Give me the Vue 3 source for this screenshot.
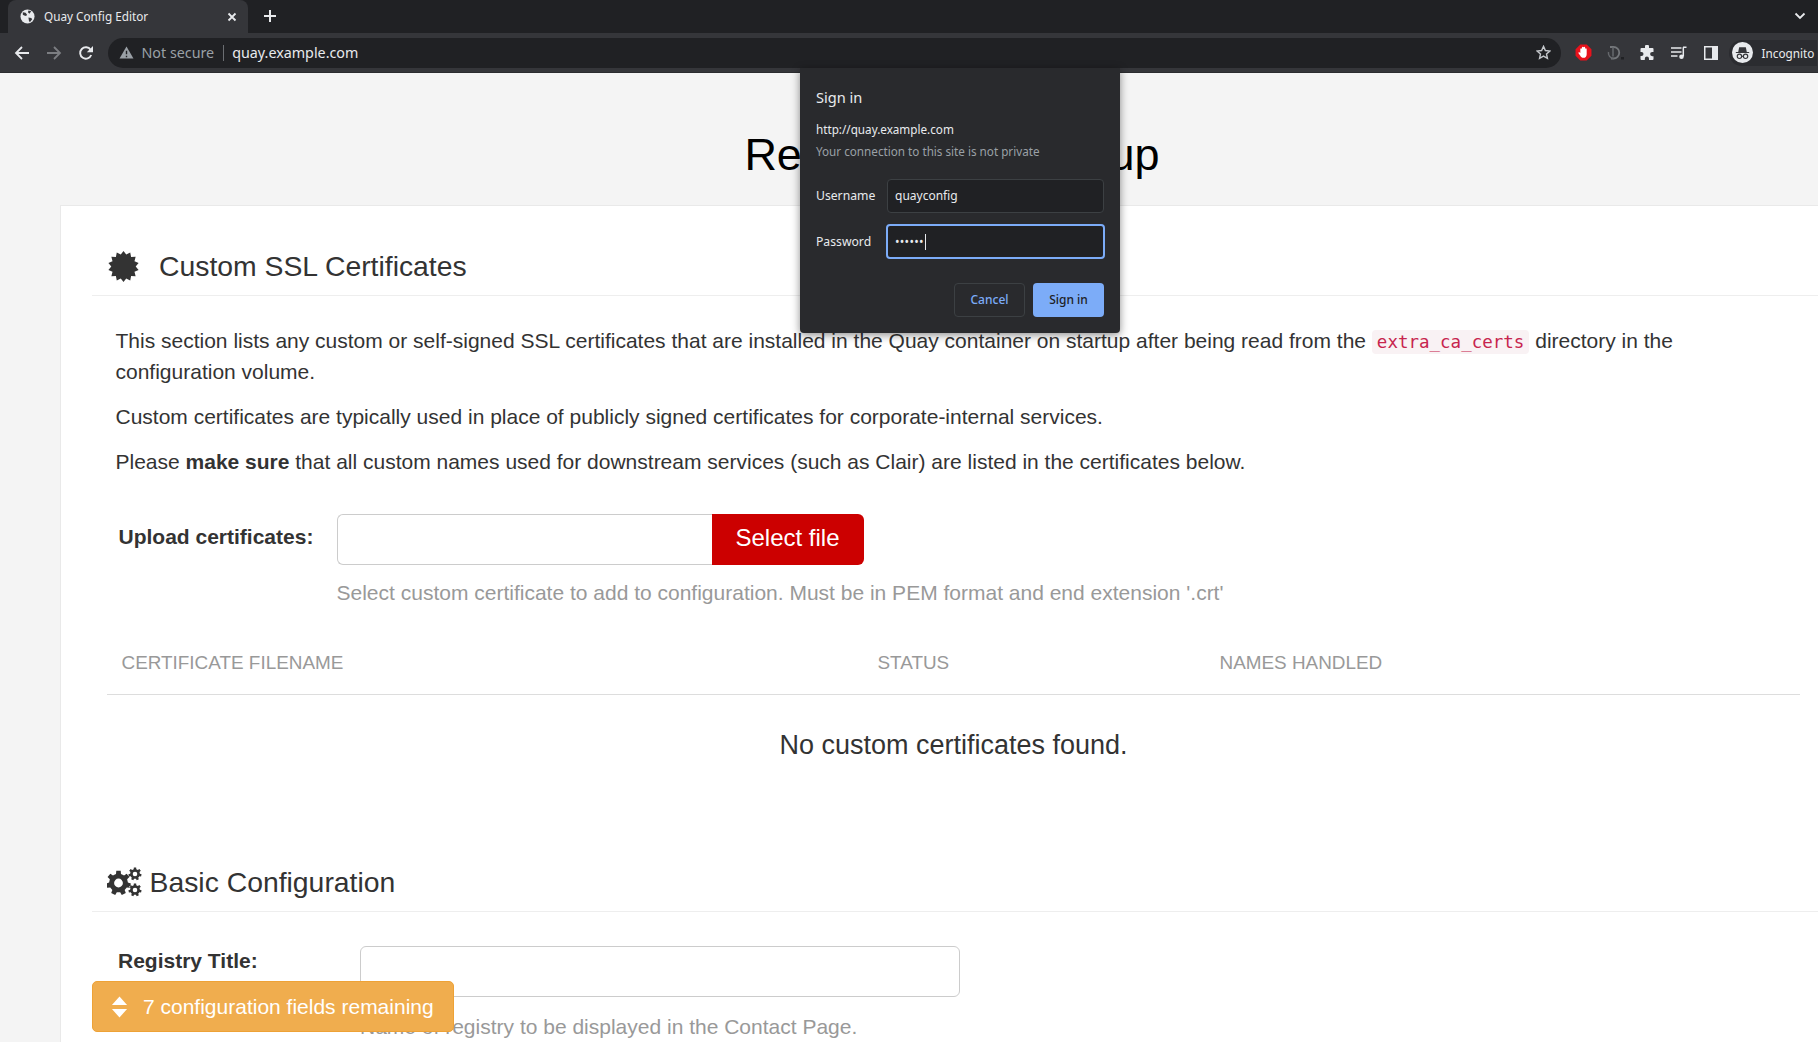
<script setup>
function gearPath(cx, cy, outer, inner, hole, teeth) {
  const pts = []
  const step = (Math.PI * 2) / teeth
  for (let i = 0; i < teeth; i++) {
    const a = i * step - Math.PI / 2
    const w = step * 0.2
    const w2 = step * 0.3
    pts.push([a - w2, inner], [a - w, outer], [a + w, outer], [a + w2, inner])
  }
  const d = pts
    .map(([a, r], i) => `${i ? 'L' : 'M'}${(cx + Math.cos(a) * r).toFixed(2)} ${(cy + Math.sin(a) * r).toFixed(2)}`)
    .join('')
  return `${d}Z M${cx - hole} ${cy}a${hole} ${hole} 0 1 0 ${hole * 2} 0a${hole} ${hole} 0 1 0 ${-hole * 2} 0Z`
}
const gears = [gearPath(11.5, 16, 12.4, 9.4, 4.4, 7), gearPath(28, 7, 6.6, 4.9, 2.3, 7), gearPath(28, 23, 6.6, 4.9, 2.3, 7)].join(' ')

const badge = Array.from({ length: 28 }, (_, i) => {
  const a = (i * Math.PI) / 14 - Math.PI / 2
  const r = i % 2 ? 11.8 : 15
  return `${(15 + Math.cos(a) * r).toFixed(2)},${(15 + Math.sin(a) * r).toFixed(2)}`
}).join(' ')
</script>

<template>
  <div class="window">
    <div class="tabstrip">
      <div class="tab">
        <svg class="favicon" viewBox="0 0 16 16" width="15" height="15">
          <circle cx="8" cy="8" r="7.5" fill="#e8eaed" />
          <path d="M3 3.500l3 .5 1.500 2-1 1.500-2-.5-1.500-1zM9 9l3 .5 1 1.500-2.500 3-1-1.500zM9 1.500l3 1-2 2.500-1.500-1.500z" fill="#35363a" />
        </svg>
        <span class="tab-title">Quay Config Editor</span>
        <svg class="tab-close" viewBox="0 0 10 10" width="10" height="10">
          <path d="M1.500 1.500l7 7M8.500 1.500l-7 7" stroke="#e8eaed" stroke-width="1.800" />
        </svg>
      </div>
      <svg class="new-tab" viewBox="0 0 14 14" width="14" height="14">
        <path d="M7 1v12M1 7h12" stroke="#e8eaed" stroke-width="2" />
      </svg>
      <svg class="tab-menu" viewBox="0 0 12 8" width="12" height="8">
        <path d="M1.500 1.500L6 6l4.500-4.500" fill="none" stroke="#e8eaed" stroke-width="1.800" />
      </svg>
    </div>

    <div class="toolbar">
      <svg class="nav" viewBox="0 0 16 16" width="16" height="16">
        <path d="M15 8H2.500M8 2L2 8l6 6" fill="none" stroke="#e8eaed" stroke-width="1.800" />
      </svg>
      <svg class="nav" viewBox="0 0 16 16" width="16" height="16">
        <path d="M1 8h12.500M8 2l6 6-6 6" fill="none" stroke="#7c7e82" stroke-width="1.800" />
      </svg>
      <svg class="nav" viewBox="0 0 16 16" width="16" height="16">
        <path d="M13.200 10a5.700 5.700 0 1 1-.6-5.200" fill="none" stroke="#e8eaed" stroke-width="1.900" />
        <path d="M15 1v6.200H8.800z" fill="#e8eaed" />
      </svg>
      <div class="omnibox">
        <svg viewBox="0 0 16 14" width="15" height="13" class="warn">
          <path d="M8 .5L15.500 13.500H.5z" fill="#9aa0a6" />
          <path d="M8 5v4M8 10.500v1.500" stroke="#202124" stroke-width="1.500" />
        </svg>
        <span class="not-secure">Not secure</span>
        <span class="divider"></span>
        <span class="url">quay.example.com</span>
        <svg class="star" viewBox="0 0 16 16" width="15" height="15">
          <path d="M8 1.500l2 4.400 4.800.5-3.600 3.200 1 4.700L8 11.900l-4.200 2.400 1-4.700L1.200 6.400 6 5.900z" fill="none" stroke="#c4c7cb" stroke-width="1.500" />
        </svg>
      </div>
      <div class="ext">
        <svg viewBox="0 0 16 16" width="17" height="17">
          <path d="M5 .5h6L15.500 5v6L11 15.500H5L.5 11V5z" fill="#e8121c" />
          <path d="M5 8.500V4.600a.8.8 0 0 1 1.500 0V3.200a.8.8 0 0 1 1.500 0V3a.8.8 0 0 1 1.500 0v1.600a.8.8 0 0 1 1.500 0v5c0 2.200-1.300 3.400-3 3.400-1.500 0-2.300-.7-3-2L3.300 8.800c-.4-1 .9-1.500 1.700-.3z" fill="#fff" />
        </svg>
        <svg viewBox="0 0 18 16" width="18" height="16">
          <path d="M3 2h3.500a5.700 5.700 0 0 1 0 11.500H4" fill="none" stroke="#74777b" stroke-width="1.800" />
          <path d="M6 2v9.500M1.500 7a5.500 5.500 0 0 0 5 6.500" fill="none" stroke="#66696d" stroke-width="1.500" />
          <rect x="14" y="12" width="3" height="2.500" fill="#202124" />
        </svg>
        <svg class="puzzle" viewBox="0 0 16 16" width="16" height="16">
          <path d="M6 1.500a2 2 0 0 1 4 0V3h3.500a1 1 0 0 1 1 1v3h-1.300a2.100 2.100 0 0 0 0 4.200h1.300V14a1 1 0 0 1-1 1H10v-1.300a2.100 2.100 0 0 0-4.200 0V15H2.500a1 1 0 0 1-1-1v-3h1a2 2 0 0 0 0-4h-1V4a1 1 0 0 1 1-1H6z" fill="#e8eaed" />
        </svg>
        <svg class="media" viewBox="0 0 16 14" width="16" height="14">
          <path d="M0 2h10.500M0 6h10.500M0 10h6.500" stroke="#e8eaed" stroke-width="1.500" />
          <path d="M12 1.300h3.500M12.300 1.300v9" stroke="#e8eaed" stroke-width="1.500" fill="none" />
          <circle cx="10.500" cy="10.800" r="2.300" fill="#e8eaed" />
        </svg>
        <svg class="panel" viewBox="0 0 14 14" width="14" height="14">
          <path fill-rule="evenodd" d="M0 0h14v14H0zM1.500 1.500v11h6.500v-11z" fill="#e8eaed" />
        </svg>
      </div>
      <div class="profile">
        <svg viewBox="0 0 22 22" width="21" height="21">
          <circle cx="11" cy="11" r="11" fill="#e8eaed" />
          <path d="M4 10.500h14v1H4zM6.500 10.500l1-5h7l1 5z" fill="#35363a" />
          <circle cx="7.800" cy="15" r="2.300" fill="none" stroke="#35363a" stroke-width="1.200" />
          <circle cx="14.200" cy="15" r="2.300" fill="none" stroke="#35363a" stroke-width="1.200" />
          <path d="M10 15h2" stroke="#35363a" stroke-width="1.100" />
        </svg>
        <span>Incognito</span>
      </div>
    </div>

    <main class="page">
      <h1 class="page-title">Red Hat Quay Setup</h1>
      <section class="card">
        <h2 class="section-title cert-title">
          <svg class="cert-icon" viewBox="0 0 30 30" width="31" height="31">
            <polygon :points="badge" fill="#333" />
          </svg>
          <span>Custom SSL Certificates</span>
        </h2>
        <div class="copy">
          <p>This section lists any custom or self-signed SSL certificates that are installed in the Quay container on startup after being read from the <code>extra_ca_certs</code> directory in the configuration volume.</p>
          <p>Custom certificates are typically used in place of publicly signed certificates for corporate-internal services.</p>
          <p>Please <strong>make sure</strong> that all custom names used for downstream services (such as Clair) are listed in the certificates below.</p>
        </div>

        <div class="upload-row">
          <label class="field-label upload-label">Upload certificates:</label>
          <div class="upload-field">
            <div class="input-group">
              <div class="file-input"></div>
              <button class="select-file">Select file</button>
            </div>
            <div class="help upload-help">Select custom certificate to add to configuration. Must be in PEM format and end extension '.crt'</div>
          </div>
        </div>

        <div class="table">
          <div class="thead">
            <span class="col-a">Certificate Filename</span>
            <span class="col-b">Status</span>
            <span>Names Handled</span>
          </div>
          <div class="empty">No custom certificates found.</div>
        </div>

        <h2 class="section-title basic-title">
          <svg viewBox="0 0 35 31" width="35" height="31" class="gears">
            <path :d="gears" fill="#333" fill-rule="evenodd" />
          </svg>
          <span>Basic Configuration</span>
        </h2>

        <div class="registry-row">
          <label class="field-label registry-label">Registry Title:</label>
          <div>
            <div class="text-input"></div>
            <div class="help">Name of registry to be displayed in the Contact Page.</div>
          </div>
        </div>
      </section>
    </main>

    <div class="toast">
      <svg viewBox="0 0 18 22" width="17" height="22">
        <path d="M9 0l8 8.800H1zM1 13.200h16L9 22z" fill="#fff" />
      </svg>
      <span>7 configuration fields remaining</span>
    </div>

    <div class="dialog">
      <div class="dlg-title">Sign in</div>
      <div class="dlg-origin">http://quay.example.com</div>
      <div class="dlg-sub">Your connection to this site is not private</div>
      <div class="dlg-row dlg-first">
        <span class="dlg-label">Username</span>
        <div class="dlg-input">quayconfig</div>
      </div>
      <div class="dlg-row dlg-second">
        <span class="dlg-label">Password</span>
        <div class="dlg-input focused"><span class="dots">••••••</span><i class="caret"></i></div>
      </div>
      <div class="dlg-actions">
        <button class="dlg-btn cancel">Cancel</button>
        <button class="dlg-btn primary">Sign in</button>
      </div>
    </div>
  </div>
</template>

<style scoped>
.window {
  position: relative;
  width: 1818px;
  height: 1042px;
  overflow: hidden;
  display: flex;
  flex-direction: column;
  background: #f4f4f4;
  font-family: "Liberation Sans", Arial, sans-serif;
  color: #333;
}
.tabstrip {
  height: 33px;
  flex: none;
  background: #202124;
  display: flex;
  align-items: flex-end;
  padding-left: 8px;
}
.tab {
  width: 240px;
  height: 33px;
  background: #35363a;
  border-radius: 8px 8px 0 0;
  display: flex;
  align-items: center;
  padding: 0 11px 0 12px;
  box-sizing: border-box;
  color: #e8eaed;
  font: 11.750px "Noto Sans", sans-serif;
}
.favicon { flex: none; }
.tab-title { margin-left: 9px; flex: 1; padding-bottom: 1px; }
.new-tab { margin: 0 0 10px 15px; }
.tab-menu { margin: 0 12px 13px auto; }
.toolbar {
  height: 39px;
  flex: none;
  background: #35363a;
  border-bottom: 1px solid #2b2c2f;
  display: flex;
  align-items: center;
  padding-left: 14px;
  gap: 16px;
  box-sizing: content-box;
}
.nav { flex: none; }
.omnibox {
  width: 1453px;
  height: 30px;
  margin-left: -2px;
  flex: none;
  border-radius: 15px;
  background: #202124;
  display: flex;
  align-items: center;
  padding: 0 10.500px 0 11px;
  box-sizing: border-box;
  font: 14.300px "Noto Sans", sans-serif;
}
.not-secure { margin-left: 7.500px; color: #9aa0a6; }
.divider { width: 1px; height: 16px; background: #6b6e72; margin: 0 8.500px; }
.url { color: #e8eaed; }
.star { margin-left: auto; }
.ext { display: flex; align-items: center; gap: 15px; margin-left: -2.500px; flex: none; }
.puzzle { margin-left: -1px; }
.media { margin-left: 1px; }
.panel { margin-left: 2px; }
.profile {
  display: flex;
  align-items: center;
  gap: 9px;
  height: 26px;
  width: 88px;
  margin-left: -5px;
  border-radius: 13px 0 0 13px;
  background: #2b2c30;
  color: #e8eaed;
  font: 11.750px "Noto Sans", sans-serif;
  padding-left: 3px;
  box-sizing: border-box;
  flex: none;
  white-space: nowrap;
}
.page { flex: 1; min-height: 0; }
.page-title {
  margin: 0;
  padding-top: 56.500px;
  height: 132px;
  box-sizing: border-box;
  text-align: center;
  width: 1904px;
  font-size: 45px;
  line-height: 50px;
  font-weight: 400;
  color: #000;
}
.card {
  margin-left: 60px;
  width: 1800px;
  background: #fff;
  border: 1px solid #e9e9e9;
  box-sizing: border-box;
  padding: 0 0 0 31px;
  height: 900px;
}
.section-title {
  display: flex;
  align-items: center;
  margin: 0;
  font-size: 28.350px;
  font-weight: 400;
  border-bottom: 1px solid #eee;
  color: #333;
  box-sizing: border-box;
  height: 46px;
}
.cert-title {
  margin-top: 44px;
  padding: 0 0 13px 16px;
}
.cert-title span { margin-left: 20px; }
.copy { padding: 30px 70px 0 23.500px; font-size: 21px; line-height: 30.500px; }
.copy p { margin: 0 0 14.500px; }
code {
  font: 17.500px "DejaVu Sans Mono", "Liberation Mono", monospace;
  color: #c7254e;
  background: #f9f2f4;
  padding: 2px 5px;
  border-radius: 4px;
}
.field-label { font-weight: 700; font-size: 21px; line-height: 30px; }
.upload-row { display: flex; margin-top: 36.500px; padding-left: 26.500px; }
.upload-label { width: 218px; flex: none; padding-top: 8px; }
.input-group { display: flex; height: 51px; }
.file-input {
  width: 375px;
  border: 1px solid #ccc;
  border-right: 0;
  border-radius: 6px 0 0 6px;
  box-sizing: border-box;
}
.select-file {
  width: 152px;
  border: 0;
  background: #c00;
  color: #fff;
  border-radius: 0 6px 6px 0;
  font: 24px "Liberation Sans", sans-serif;
  padding: 0 0 2px;
}
.help { font-size: 21px; line-height: 30px; color: #999; margin-top: 15px; white-space: nowrap; }
.upload-help { margin-top: 13px; }
.table { margin: 24.500px 59px 0 15px; }
.thead {
  display: flex;
  height: 63px;
  align-items: center;
  padding-left: 14.500px;
  border-bottom: 1px solid #ddd;
  box-sizing: border-box;
  text-transform: uppercase;
  font-size: 18.900px;
  color: #999;
}
.col-a { width: 756px; }
.col-b { width: 342px; }
.empty { text-align: center; font-size: 27px; line-height: 30px; padding-top: 34.500px; height: 122px; box-sizing: border-box; }
.basic-title { padding: 0 0 13px 15px; margin-top: 49px; gap: 7.500px; }
.gears { flex: none; }
.registry-row { display: flex; margin-top: 34px; padding-left: 26px; }
.registry-label { width: 242px; flex: none; }
.text-input { width: 600px; height: 51px; border: 1px solid #ccc; border-radius: 6px; box-sizing: border-box; }

.toast {
  position: absolute;
  left: 92px;
  top: 981px;
  width: 362px;
  height: 51px;
  box-sizing: border-box;
  background: #f0ad4e;
  border: 1px solid #eea236;
  border-radius: 5px;
  display: flex;
  align-items: center;
  gap: 15px;
  padding-left: 18px;
  color: #fff;
  font-size: 21px;
}
.dialog {
  position: absolute;
  left: 800px;
  top: 68px;
  width: 320px;
  height: 265px;
  box-sizing: border-box;
  background: #292a2d;
  border-radius: 0 0 4px 4px;
  box-shadow: 0 2px 8px rgba(0, 0, 0, .45);
  padding: 19px 16px 0;
  font: 12px "Noto Sans", sans-serif;
  color: #e8eaed;
}
.dlg-title { font-size: 14.600px; line-height: 20px; }
.dlg-origin { margin-top: 11px; line-height: 22px; font-size: 11.700px; }
.dlg-sub { color: #9aa0a6; line-height: 22px; font-size: 11.700px; }
.dlg-row { display: flex; align-items: center; justify-content: space-between; }
.dlg-first { margin-top: 17px; }
.dlg-second { margin-top: 11px; }
.dlg-label { padding-bottom: 2px; font-size: 12.200px; }
.dlg-second .dlg-label { padding-bottom: 1px; }
.dlg-input {
  width: 217px;
  height: 34px;
  box-sizing: border-box;
  border: 1px solid #3c4043;
  border-radius: 4px;
  background: #202124;
  display: flex;
  align-items: center;
  padding: 0 0 2px 7px;
}
.dlg-input.focused { border: 2px solid #7cacf8; padding: 0 0 0 7px; width: 219px; height: 35px; margin-right: -1px; }
.dots { font-size: 12px; letter-spacing: .3px; }
.caret { width: 1px; height: 16px; background: #e8eaed; margin-left: 1px; }
.dlg-actions { display: flex; justify-content: flex-end; gap: 8px; margin-top: 24px; }
.dlg-btn {
  height: 34px;
  width: 71px;
  border-radius: 4px;
  font: 500 12px "Noto Sans", sans-serif;
  padding: 0 0 1px;
}
.cancel { background: #292a2d; color: #7cacf8; border: 1px solid #3c4043; }
.primary { background: #7cacf8; color: #202124; border: 0; }
</style>

<style>
html, body { margin: 0; background: #f4f4f4; overflow: hidden; }
</style>
